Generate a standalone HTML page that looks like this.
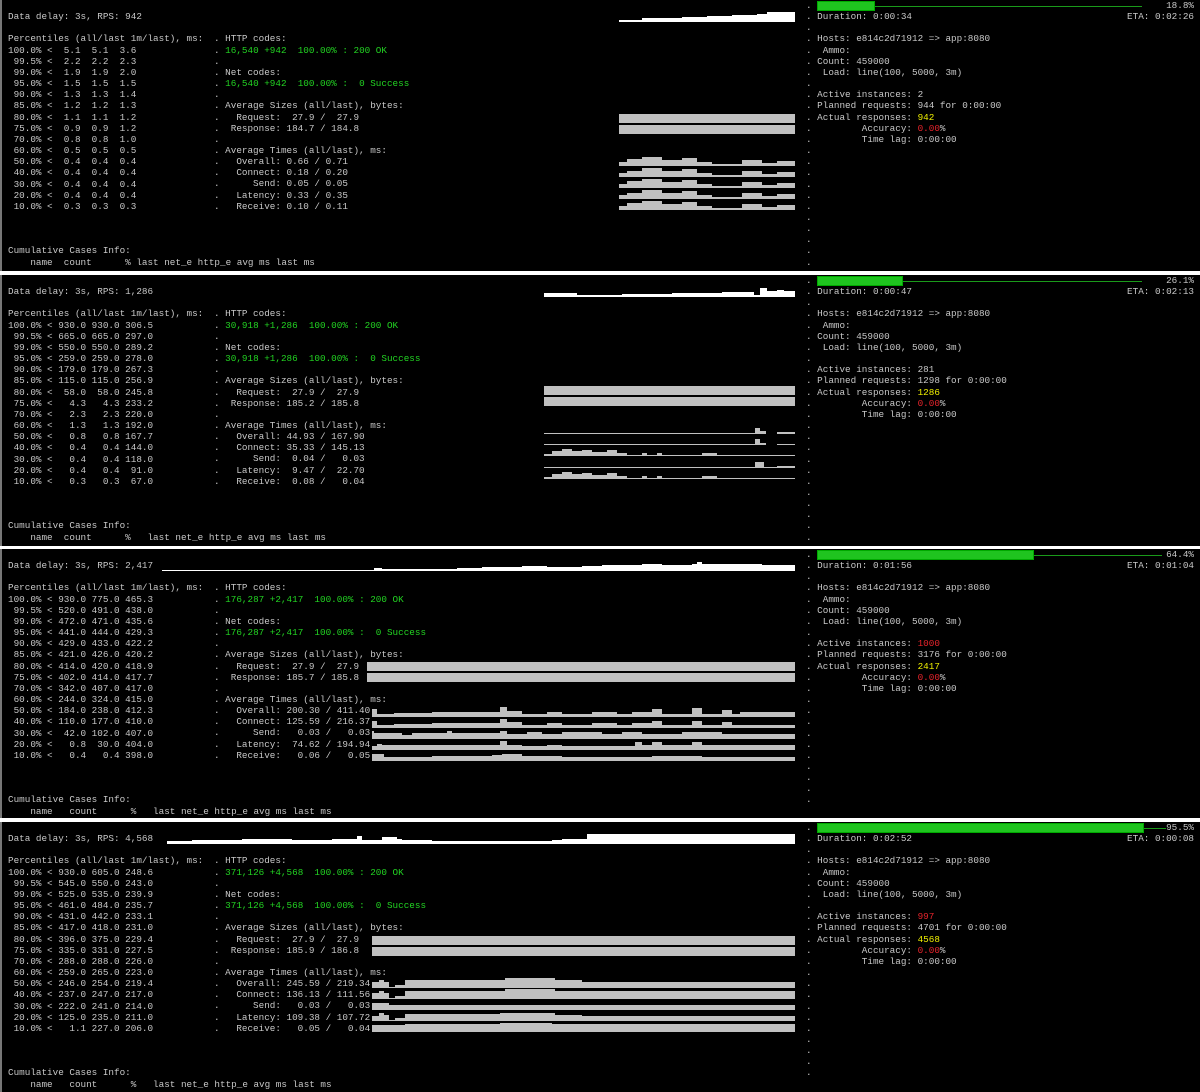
<!DOCTYPE html>
<html><head><meta charset="utf-8"><style>
html,body{margin:0;padding:0;background:#fff;}
body{width:1200px;height:1092px;position:relative;overflow:hidden;}
.p{position:absolute;left:0;width:1198px;background:#000;overflow:hidden;border-left:2px solid #777;}
pre{position:absolute;margin:0;font-family:"Liberation Mono",monospace;font-size:9.3px;line-height:11.15px;color:#c8c8c8;white-space:pre;}
.g{color:#22d322}.y{color:#f0f000}.r{color:#e8242c}
svg{position:absolute;left:0;top:0}
.pb{position:absolute;height:8px;background:#1fc41f;border:1px solid #0a0;top:1px;left:815px}
.pt{position:absolute;top:6px;height:0;border-top:1px solid #1a9a1a;}
.rt{position:absolute;right:6px;text-align:right}
</style></head><body>

<!-- PANEL 1 -->
<div class="p" style="top:0;height:271px">
<pre style="left:6px;top:0">

Data delay: 3s, RPS: 942

Percentiles (all/last 1m/last), ms:
100.0% <  5.1  5.1  3.6
 99.5% <  2.2  2.2  2.3
 99.0% <  1.9  1.9  2.0
 95.0% <  1.5  1.5  1.5
 90.0% <  1.3  1.3  1.4
 85.0% <  1.2  1.2  1.3
 80.0% <  1.1  1.1  1.2
 75.0% <  0.9  0.9  1.2
 70.0% <  0.8  0.8  1.0
 60.0% <  0.5  0.5  0.5
 50.0% <  0.4  0.4  0.4
 40.0% <  0.4  0.4  0.4
 30.0% <  0.4  0.4  0.4
 20.0% <  0.4  0.4  0.4
 10.0% <  0.3  0.3  0.3



Cumulative Cases Info:
    name  count      % last net_e http_e avg ms last ms</pre>
<pre style="left:212px;top:33.45px">. HTTP codes:
. <span class="g">16,540 +942  100.00% : 200 OK</span>
.
. Net codes:
. <span class="g">16,540 +942  100.00% :  0 Success</span>
.
. Average Sizes (all/last), bytes:
.   Request:  27.9 /  27.9
.  Response: 184.7 / 184.8
.
. Average Times (all/last), ms:
.   Overall: 0.66 / 0.71
.   Connect: 0.18 / 0.20
.      Send: 0.05 / 0.05
.   Latency: 0.33 / 0.35
.   Receive: 0.10 / 0.11</pre>
<pre style="left:804px;top:0">.
. Duration: 0:00:34
.
. Hosts: e814c2d71912 =&gt; app:8080
.  Ammo:
. Count: 459000
.  Load: line(100, 5000, 3m)
.
. Active instances: 2
. Planned requests: 944 for 0:00:00
. Actual responses: <span class="y">942</span>
.         Accuracy: <span class="r">0.00</span>%
.         Time lag: 0:00:00
.
.
.
.
.
.
.
.
.
.
.</pre>
<div class="pb" style="width:56px"></div><div class="pt" style="left:873px;width:267px"></div>
<pre class="rt" style="top:0">18.8%
ETA: 0:02:26</pre>
<svg width="1198" height="271">
<path d="M617 22 V20 H640 V18 H680 V17 H705 V16 H730 V15 H755 V14 H765 V12 H793 V22 Z" fill="#fff"/>
<rect x="617" y="114" width="176" height="9" fill="#c0c0c0"/>
<rect x="617" y="125" width="176" height="9" fill="#c0c0c0"/>
<g fill="#c0c0c0">
<path d="M617 166 V162 H625 V159 H640 V157 H660 V160 H680 V158 H695 V162 H710 V164 H740 V160 H760 V163 H775 V161 H793 V166 Z"/>
<path d="M617 177 V173 H625 V171 H640 V168 H660 V171 H680 V169 H695 V173 H710 V175 H740 V171 H760 V174 H775 V172 H793 V177 Z"/>
<path d="M617 188 V184 H625 V181 H640 V179 H660 V182 H680 V180 H695 V184 H710 V186 H740 V182 H760 V185 H775 V183 H793 V188 Z"/>
<path d="M617 199 V195 H625 V193 H640 V190 H660 V193 H680 V191 H695 V195 H710 V197 H740 V193 H760 V196 H775 V194 H793 V199 Z"/>
<path d="M617 210 V206 H625 V203 H640 V201 H660 V204 H680 V202 H695 V206 H710 V208 H740 V204 H760 V207 H775 V205 H793 V210 Z"/>
</g>
</svg>
</div>

<!-- PANEL 2 -->
<div class="p" style="top:275px;height:271px">
<pre style="left:6px;top:0">

Data delay: 3s, RPS: 1,286

Percentiles (all/last 1m/last), ms:
100.0% < 930.0 930.0 306.5
 99.5% < 665.0 665.0 297.0
 99.0% < 550.0 550.0 289.2
 95.0% < 259.0 259.0 278.0
 90.0% < 179.0 179.0 267.3
 85.0% < 115.0 115.0 256.9
 80.0% <  58.0  58.0 245.8
 75.0% <   4.3   4.3 233.2
 70.0% <   2.3   2.3 220.0
 60.0% <   1.3   1.3 192.0
 50.0% <   0.8   0.8 167.7
 40.0% <   0.4   0.4 144.0
 30.0% <   0.4   0.4 118.0
 20.0% <   0.4   0.4  91.0
 10.0% <   0.3   0.3  67.0



Cumulative Cases Info:
    name  count      %   last net_e http_e avg ms last ms</pre>
<pre style="left:212px;top:33.45px">. HTTP codes:
. <span class="g">30,918 +1,286  100.00% : 200 OK</span>
.
. Net codes:
. <span class="g">30,918 +1,286  100.00% :  0 Success</span>
.
. Average Sizes (all/last), bytes:
.   Request:  27.9 /  27.9
.  Response: 185.2 / 185.8
.
. Average Times (all/last), ms:
.   Overall: 44.93 / 167.90
.   Connect: 35.33 / 145.13
.      Send:  0.04 /   0.03
.   Latency:  9.47 /  22.70
.   Receive:  0.08 /   0.04</pre>
<pre style="left:804px;top:0">.
. Duration: 0:00:47
.
. Hosts: e814c2d71912 =&gt; app:8080
.  Ammo:
. Count: 459000
.  Load: line(100, 5000, 3m)
.
. Active instances: 281
. Planned requests: 1298 for 0:00:00
. Actual responses: <span class="y">1286</span>
.         Accuracy: <span class="r">0.00</span>%
.         Time lag: 0:00:00
.
.
.
.
.
.
.
.
.
.
.</pre>
<div class="pb" style="width:84px"></div><div class="pt" style="left:901px;width:239px"></div>
<pre class="rt" style="top:0">26.1%
ETA: 0:02:13</pre>
<svg width="1198" height="271">
<path d="M542 19 V18 H575 V20 H620 V19 H670 V18 H720 V17 H752 V20 H758 V13 H765 V16 H775 V15 H782 V16 H793 V22 H542 Z" fill="#fff"/>
<rect x="542" y="111" width="251" height="9" fill="#c0c0c0"/>
<rect x="542" y="122" width="251" height="9" fill="#c0c0c0"/>
<g fill="#c0c0c0">
<rect x="542" y="158" width="211" height="1"/><path d="M753 159 V153 H758 V156 H764 V159 H775 V157 H793 V159 Z"/>
<rect x="542" y="169" width="211" height="1"/><path d="M753 170 V164 H758 V168 H764 V170 H775 V169 H793 V170 Z"/>
<path d="M542 181 V179 H550 V176 H560 V174 H570 V176 H580 V175 H590 V177 H605 V175 H615 V178 H625 V180 H640 V178 H645 V180 H655 V178 H660 V180 H700 V178 H715 V180 H793 V181 Z"/>
<rect x="542" y="192" width="211" height="1"/><path d="M753 193 V187 H762 V192 H775 V191 H793 V193 Z"/>
<path d="M542 204 V202 H550 V199 H560 V197 H570 V199 H580 V198 H590 V200 H605 V198 H615 V201 H625 V203 H640 V201 H645 V203 H655 V201 H660 V203 H700 V201 H715 V203 H793 V204 Z"/>
</g>
</svg>
</div>

<!-- PANEL 3 -->
<div class="p" style="top:549px;height:269px">
<pre style="left:6px;top:0">

Data delay: 3s, RPS: 2,417

Percentiles (all/last 1m/last), ms:
100.0% < 930.0 775.0 465.3
 99.5% < 520.0 491.0 438.0
 99.0% < 472.0 471.0 435.6
 95.0% < 441.0 444.0 429.3
 90.0% < 429.0 433.0 422.2
 85.0% < 421.0 426.0 420.2
 80.0% < 414.0 420.0 418.9
 75.0% < 402.0 414.0 417.7
 70.0% < 342.0 407.0 417.0
 60.0% < 244.0 324.0 415.0
 50.0% < 184.0 238.0 412.3
 40.0% < 110.0 177.0 410.0
 30.0% <  42.0 102.0 407.0
 20.0% <   0.8  30.0 404.0
 10.0% <   0.4   0.4 398.0



Cumulative Cases Info:
    name   count      %   last net_e http_e avg ms last ms</pre>
<pre style="left:212px;top:33.45px">. HTTP codes:
. <span class="g">176,287 +2,417  100.00% : 200 OK</span>
.
. Net codes:
. <span class="g">176,287 +2,417  100.00% :  0 Success</span>
.
. Average Sizes (all/last), bytes:
.   Request:  27.9 /  27.9
.  Response: 185.7 / 185.8
.
. Average Times (all/last), ms:
.   Overall: 200.30 / 411.40
.   Connect: 125.59 / 216.37
.      Send:   0.03 /   0.03
.   Latency:  74.62 / 194.94
.   Receive:   0.06 /   0.05</pre>
<pre style="left:804px;top:0">.
. Duration: 0:01:56
.
. Hosts: e814c2d71912 =&gt; app:8080
.  Ammo:
. Count: 459000
.  Load: line(100, 5000, 3m)
.
. Active instances: <span class="r">1000</span>
. Planned requests: 3176 for 0:00:00
. Actual responses: <span class="y">2417</span>
.         Accuracy: <span class="r">0.00</span>%
.         Time lag: 0:00:00
.
.
.
.
.
.
.
.
.
.</pre>
<div class="pb" style="width:215px"></div><div class="pt" style="left:1032px;width:128px"></div>
<pre class="rt" style="top:0">64.4%
ETA: 0:01:04</pre>
<svg width="1198" height="269">
<path d="M160 22 V21 H372 V19 H380 V20 H455 V19 H480 V18 H520 V17 H545 V18 H580 V17 H600 V16 H640 V15 H660 V16 H690 V15 H695 V13 H700 V15 H760 V16 H793 V22 Z" fill="#fff"/>
<rect x="365" y="113" width="428" height="9" fill="#c0c0c0"/>
<rect x="365" y="124" width="428" height="9" fill="#c0c0c0"/>
<g fill="#c0c0c0">
<path d="M370 168 V160 H375 V165 H392 V164 H430 V163 H498 V158 H505 V162 H520 V165 H545 V163 H560 V165 H565 V165 H590 V163 H615 V165 H630 V163 H650 V160 H660 V165 H690 V159 H700 V165 H720 V161 H730 V165 H738 V163 H793 V168 Z"/>
<path d="M370 179 V172 H375 V176 H392 V175 H430 V174 H498 V170 H505 V173 H520 V176 H545 V174 H560 V176 H590 V174 H615 V176 H630 V174 H650 V172 H660 V176 H690 V172 H700 V176 H720 V173 H730 V176 H793 V179 Z"/>
<path d="M370 190 V182 H372 V184 H400 V186 H410 V184 H445 V182 H450 V184 H498 V182 H505 V185 H525 V183 H540 V185 H560 V183 H600 V185 H620 V183 H640 V185 H680 V183 H720 V185 H793 V190 Z"/>
<path d="M370 201 V197 H375 V195 H380 V196 H498 V192 H505 V196 H520 V197 H545 V196 H560 V197 H633 V193 H640 V196 H650 V193 H660 V196 H690 V193 H700 V196 H793 V201 Z"/>
<path d="M370 212 V205 H382 V208 H430 V207 H490 V206 H500 V205 H520 V207 H560 V208 H650 V207 H700 V208 H793 V212 Z"/>
</g>
</svg>
</div>

<!-- PANEL 4 -->
<div class="p" style="top:822px;height:270px">
<pre style="left:6px;top:0">

Data delay: 3s, RPS: 4,568

Percentiles (all/last 1m/last), ms:
100.0% < 930.0 605.0 248.6
 99.5% < 545.0 550.0 243.0
 99.0% < 525.0 535.0 239.9
 95.0% < 461.0 484.0 235.7
 90.0% < 431.0 442.0 233.1
 85.0% < 417.0 418.0 231.0
 80.0% < 396.0 375.0 229.4
 75.0% < 335.0 331.0 227.5
 70.0% < 288.0 288.0 226.0
 60.0% < 259.0 265.0 223.0
 50.0% < 246.0 254.0 219.4
 40.0% < 237.0 247.0 217.0
 30.0% < 222.0 241.0 214.0
 20.0% < 125.0 235.0 211.0
 10.0% <   1.1 227.0 206.0



Cumulative Cases Info:
    name   count      %   last net_e http_e avg ms last ms</pre>
<pre style="left:212px;top:33.45px">. HTTP codes:
. <span class="g">371,126 +4,568  100.00% : 200 OK</span>
.
. Net codes:
. <span class="g">371,126 +4,568  100.00% :  0 Success</span>
.
. Average Sizes (all/last), bytes:
.   Request:  27.9 /  27.9
.  Response: 185.9 / 186.8
.
. Average Times (all/last), ms:
.   Overall: 245.59 / 219.34
.   Connect: 136.13 / 111.56
.      Send:   0.03 /   0.03
.   Latency: 109.38 / 107.72
.   Receive:   0.05 /   0.04</pre>
<pre style="left:804px;top:0">.
. Duration: 0:02:52
.
. Hosts: e814c2d71912 =&gt; app:8080
.  Ammo:
. Count: 459000
.  Load: line(100, 5000, 3m)
.
. Active instances: <span class="r">997</span>
. Planned requests: 4701 for 0:00:00
. Actual responses: <span class="y">4568</span>
.         Accuracy: <span class="r">0.00</span>%
.         Time lag: 0:00:00
.
.
.
.
.
.
.
.
.
.</pre>
<div class="pb" style="width:325px"></div><div class="pt" style="left:1142px;width:22px"></div>
<pre class="rt" style="top:0">95.5%
ETA: 0:00:08</pre>
<svg width="1198" height="270">
<path d="M165 22 V19 H190 V18 H240 V17 H290 V18 H330 V17 H355 V14 H360 V18 H380 V15 H395 V17 H400 V18 H430 V19 H550 V18 H560 V17 H585 V12 H793 V22 Z" fill="#fff"/>
<rect x="370" y="114" width="423" height="9" fill="#c0c0c0"/>
<rect x="370" y="125" width="423" height="9" fill="#c0c0c0"/>
<g fill="#c0c0c0">
<path d="M370 166 V160 H377 V158 H382 V160 H387 V165 H393 V163 H403 V158 H503 V156 H553 V158 H580 V160 H793 V166 Z"/>
<path d="M370 177 V171 H377 V169 H382 V171 H387 V176 H393 V174 H403 V169 H503 V167 H553 V169 H793 V177 Z"/>
<path d="M370 188 V181 H387 V183 H793 V188 Z"/>
<path d="M370 199 V194 H377 V191 H382 V193 H387 V198 H393 V196 H403 V192 H498 V191 H553 V193 H580 V194 H793 V199 Z"/>
<path d="M370 210 V203 H403 V202 H498 V201 H550 V202 H793 V210 Z"/>
</g>
</svg>
</div>
</body></html>
